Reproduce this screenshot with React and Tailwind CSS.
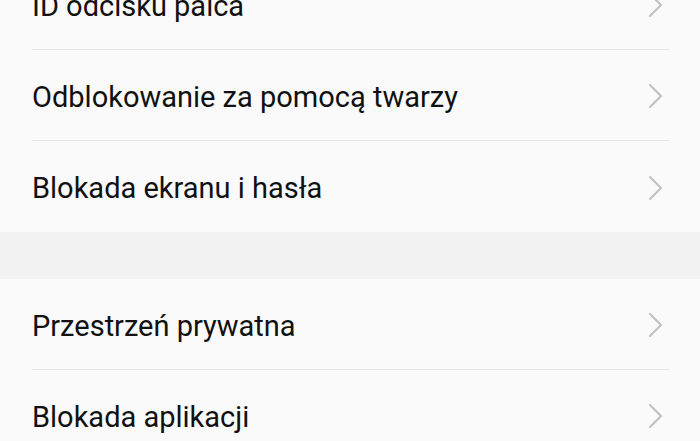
import React from "react";

function Chevron() {
  return (
    <svg width="16" height="26" viewBox="0 0 16 26" className="shrink-0">
      <polyline points="2,2 13,13 2,24" fill="none" stroke="#c2c2c2" strokeWidth="2.2" strokeLinecap="round" strokeLinejoin="round" />
    </svg>
  );
}

function Row({ label, border = true }) {
  return (
    <div className={`ml-8 mr-[31px] h-[91px] flex items-center justify-between ${border ? "border-b border-[#e6e6e6]" : ""}`}>
      <span className="text-[29px] text-[#111111] leading-none pt-[4px]" style={{ fontFamily: "Roboto, 'Noto Sans', sans-serif" }}>{label}</span>
      <div className="mr-[5px] pt-[2px]"><Chevron /></div>
    </div>
  );
}

export default function App() {
  return (
    <div className="w-[700px] h-[441px] overflow-hidden bg-[#fafafa]">
      <div className="-mt-[41px]">
        <Row label="ID odcisku palca" />
        <Row label="Odblokowanie za pomocą twarzy" />
        <Row label="Blokada ekranu i hasła" border={false} />
        <div className="h-[47px] bg-[#f2f2f2]" />
        <Row label="Przestrzeń prywatna" />
        <Row label="Blokada aplikacji" />
      </div>
    </div>
  );
}
